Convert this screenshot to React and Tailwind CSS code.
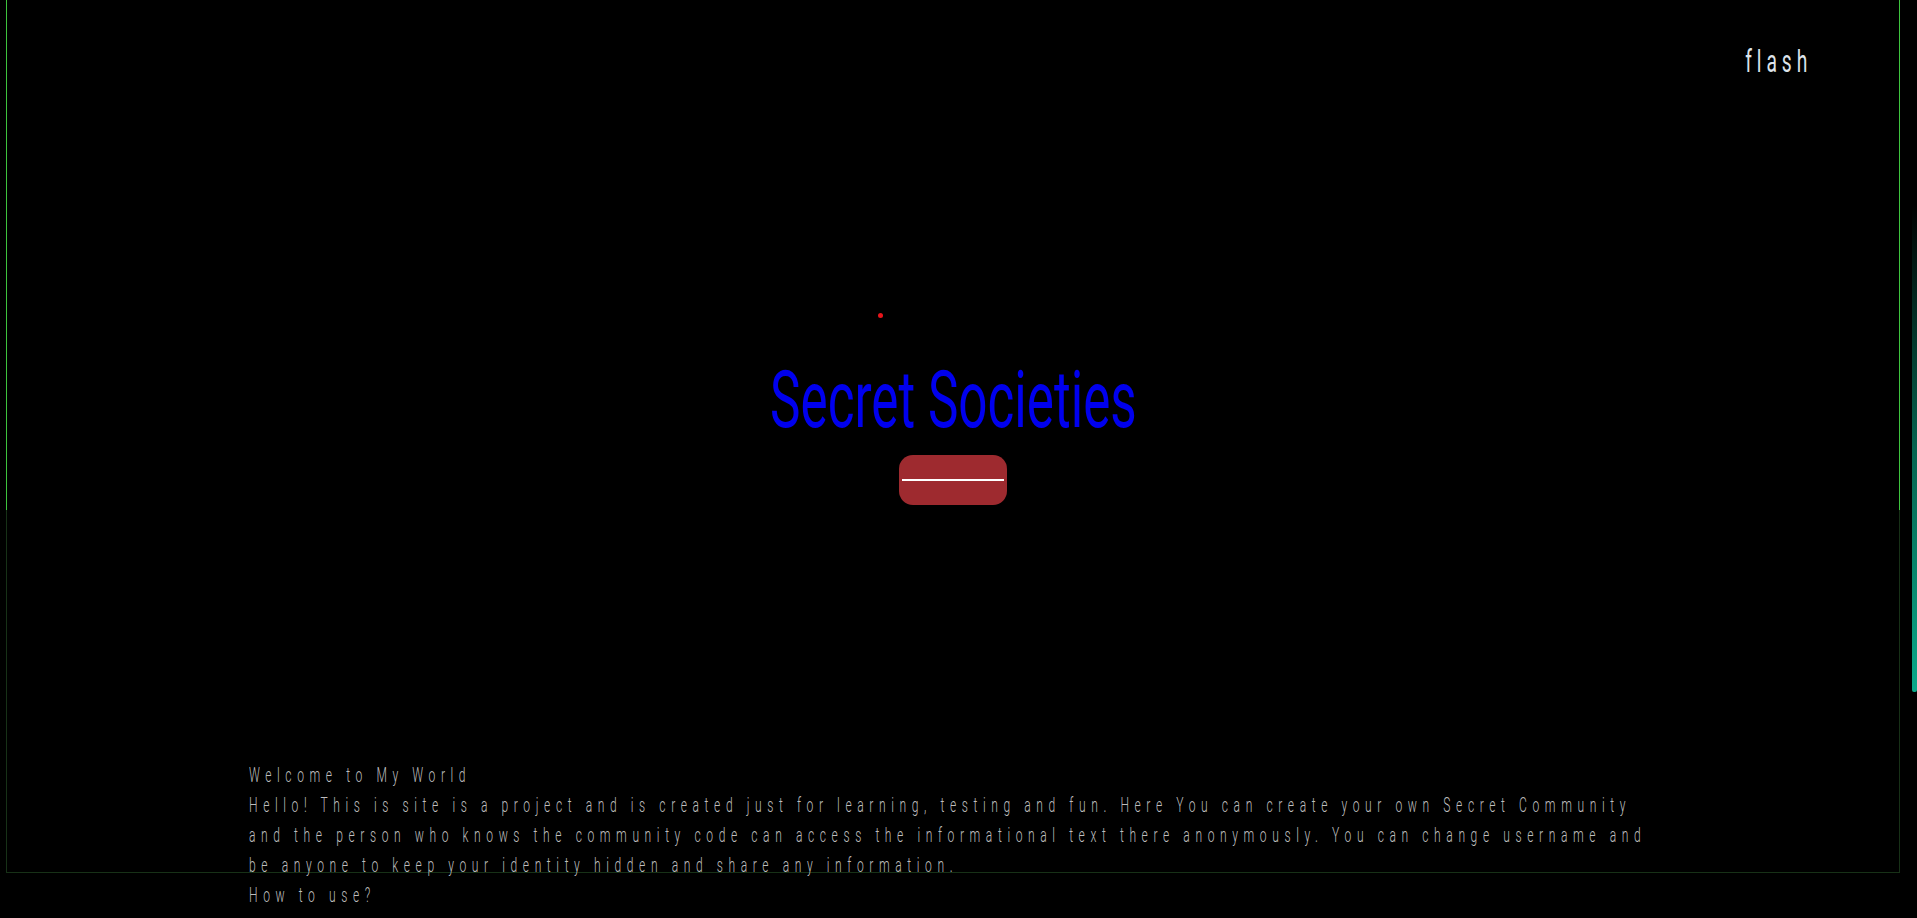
const FONT = "font-['Roboto','Liberation_Sans',sans-serif]";

const INTRO_LINES = [
  'Welcome to My World',
  'Hello! This is site is a project and is created just for learning, testing and fun. Here You can create your own Secret Community',
  'and the person who knows the community code can access the informational text there anonymously. You can change username and',
  'be anyone to keep your identity hidden and share any information.',
  'How to use?',
];

export default function App() {
  return (
    <div className={`relative min-h-[918px] bg-black ${FONT}`}>
      <div className="ml-[6px] w-[1894px]">
        {/* hero */}
        <section className="relative flex h-[510px] flex-col border-x border-[#3ec43e]">
          <nav className="flex justify-end pr-[87px] pt-[46px]">
            <span className="origin-right scale-x-[0.62] text-[31px] leading-none tracking-[8px] text-[#dde3ea]">
              flash
            </span>
          </nav>

          <span className="absolute left-[871px] top-[313px] h-[5px] w-[5px] rounded-full bg-[#e8141a]" />

          <div className="mt-[283px] flex flex-col items-center">
            <h1 className="scale-x-[0.64] text-[80px] font-normal leading-none text-[#0000ee]">
              Secret Societies
            </h1>
            <div className="mt-[15px] h-[50px] w-[108px] rounded-[14px] bg-[#9e2a2f] px-[3px] pt-[24px]">
              <div className="h-[2px] bg-white" />
            </div>
          </div>
        </section>

        {/* intro */}
        <section className="h-[363px] border-x border-b border-[#173117] pt-[251px]">
          <div className="ml-[242px] origin-left scale-x-[0.62] whitespace-nowrap text-[19.5px] font-light leading-[30px] tracking-[9px] text-[#bdbdbd]">
            {INTRO_LINES.map((line) => (
              <p key={line}>{line}</p>
            ))}
          </div>
        </section>
      </div>

      {/* scrollbar thumb */}
      <div className="absolute right-0 top-[205px] h-[487px] w-[5px] rounded-b-[2px] bg-linear-to-b from-transparent via-[#05634f] to-[#0aa98a]" />
    </div>
  );
}
